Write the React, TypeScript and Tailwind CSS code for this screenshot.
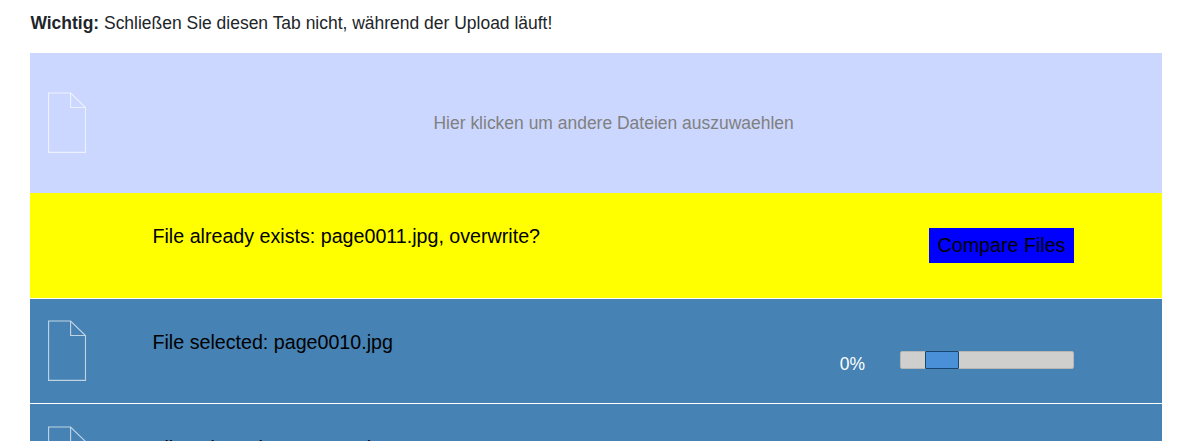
function FileIcon({ className = '' }: { className?: string }) {
  return (
    <svg className={`block shrink-0 ${className}`} width="40" height="62" viewBox="0 0 40 62" fill="none" stroke="white" strokeWidth="1.15">
      <path d="M1.6 1H23.6L38.5 15.5V60.35H1.6Z" />
      <path d="M23.6 1V15.5H38.5" />
    </svg>
  );
}

function SelectedRow({ name, className = '' }: { name: string; className?: string }) {
  return (
    <div className={`flex border-t border-white bg-[#4682b4] ${className}`}>
      <FileIcon className="ml-[17px] mt-[21px] opacity-65" />
      <div className="ml-[65.5px] mt-[28px] w-[687.2px] text-[19.67px] leading-[30px] text-black">{name}</div>
      <div className="mt-[52px] w-[60.3px] text-[17.48px] leading-[26px] text-white">0%</div>
      <div className="mt-[52px] h-[18px] w-[174px] rounded-[2px] border border-[#b6b6b3] bg-[#cfcfce]">
        <div className="-mt-px ml-[24px] h-[18px] w-[34px] rounded-[1px] border border-[#184673] bg-[#4a90d9]" />
      </div>
    </div>
  );
}

export default function App() {
  return (
    <div className="h-[441px] overflow-hidden bg-white pl-[30px] pr-[29px] font-['Liberation_Sans',sans-serif] text-[#212529]">
      <p className="flex h-[53px] pl-[0.4px] pt-[10px] text-[17.48px] leading-[26px]">
        <span className="whitespace-pre"><b>Wichtig:</b> Schließen Sie diesen Tab nicht, während der Upload läuft!</span>
      </p>
      <div className="flex h-[140px] bg-[#ccd7ff]">
        <FileIcon className="ml-[17px] mt-[39px] opacity-65" />
        <div className="ml-[346.5px] mt-[57px] text-[17.48px] leading-[26px] text-[#808080]">Hier klicken um andere Dateien auszuwaehlen</div>
      </div>
      <div className="flex h-[105px] bg-[#ffff00] text-[19.67px] leading-[30px] text-black">
        <div className="ml-[122.5px] mt-[28px] w-[776.5px]">File already exists: page0011.jpg, overwrite?</div>
        <button className="mt-[35px] h-[35px] w-[145px] bg-[#0000ff] text-center leading-[35px]">Compare Files</button>
      </div>
      <SelectedRow className="h-[105px]" name="File selected: page0010.jpg" />
      <SelectedRow className="h-[106px] pt-px" name="File selected: page0009.jpg" />
    </div>
  );
}
